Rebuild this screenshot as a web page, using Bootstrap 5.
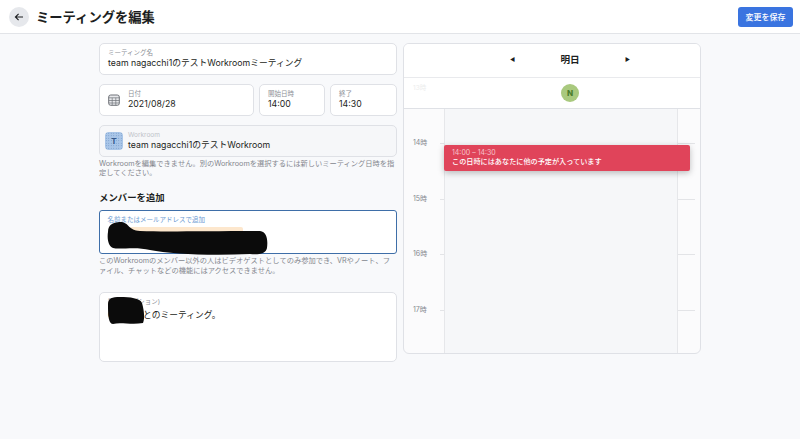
<!DOCTYPE html>
<html lang="ja"><head><meta charset="utf-8"><title>ミーティングを編集</title>
<link href="https://cdn.jsdelivr.net/npm/bootstrap@5.3.0/dist/css/bootstrap.min.css" rel="stylesheet">
<style>
html,body{height:100%}
body{background:#f8f9fb;color:#1c1e21;font-family:Inter,"Noto Sans CJK JP",sans-serif;overflow:hidden;font-size:8.75px}
.topbar{height:34px;background:#fff;border-bottom:1px solid #e2e4e8;padding:0 7px 0 9px}
.backbtn{width:20px;height:20px;border-radius:50%;background:#e6e8ec;border:0;padding:0}
.pagetitle{font-size:13.3px;font-weight:700;margin:0 0 0 7px;line-height:20px}
.savebtn{font-size:8px;font-weight:500;background:#3a74e0;color:#fff;border:0;border-radius:3px;width:55px;height:20px;padding:0}
.wrap{padding-top:9px;gap:6px}
.leftcol,.calcol{width:298px}
.fieldbox{background:#fff;border:1px solid #dfe1e6;border-radius:5px;padding:5px 8px;position:relative}
.fieldbox.h32{height:32px}
.fieldlab{font-size:6.5px;line-height:8px;color:#8d9097;display:block}
.fieldval{font-size:8.75px;line-height:12px;display:block}
.rowgap{margin-top:9px;gap:5px}
.datebox{width:155px}
.timebox1{width:66px}
.timebox2{width:67px}
.calicon{width:12px;height:12px;flex:none;margin-right:8px}
.wrbox{background:#f6f7f9;padding:0 8px 0 5px;height:31.5px;margin-top:9px}
.wrimg{width:18px;height:18px;border-radius:4px;background:#a9c6e8;color:#34578a;font-size:8px;font-weight:700;flex:none;margin-right:5px;background-image:radial-gradient(#6d92c4 .6px,transparent .8px);background-size:2.5px 2.5px}
.wrbox .fieldlab{color:#c0c3c9}
.hint{font-size:7.25px;line-height:9.5px;color:#85888f;margin:2px 0 0}
.sectitle{font-size:9.4px;font-weight:700;line-height:14px;margin:13px 0 5.5px}
.memberbox{height:44px;border:1.5px solid #3e6ea8;border-radius:3px;background:#fff;padding:5px 7.5px;position:relative}
.memberbox .fieldlab{color:#6d9ad2}
.chip{display:block;width:113px;height:8px;background:#fde7cd;border-radius:2px;margin:3px 0 0 22px}
.notebox{height:69.5px;margin-top:17px}
.notebox .fieldval{margin-top:3px}
.scrib{position:absolute;overflow:visible;pointer-events:none;filter:blur(.7px)}
.scrib1{left:0;top:0;width:180px;height:50px}
.scrib2{left:0;top:0;width:60px;height:40px}
.calbox{height:311px;background:#fbfbfc;border:1px solid #dfe1e6;border-radius:6px;overflow:hidden;position:relative}
.calhead{height:33.5px;background:#fff;border-bottom:1.5px solid #e9eaed;font-size:9.6px;font-weight:700;gap:44px;padding-left:36px}
.tri{font-size:5.5px;font-weight:400;line-height:1;color:#1c1e21;width:8px;text-align:center}
.alldayrow{height:31px;background:#fff;border-bottom:1px solid #dfe1e6;position:relative;padding-left:36px}
.avatar{width:18px;height:18px;border-radius:50%;background:#a9c97e;color:#4b7d2c;font-size:8px;font-weight:800}
.faint{position:absolute;left:9px;top:6px;font-size:6.5px;color:#eceded}
.calbody{height:245px;position:relative}
.gutter{width:40px;flex:none}
.daycol{width:234px;flex:none;background:#f6f7f9;border-left:1px solid #e6e7ea;border-right:1px solid #e6e7ea}
.sidecol{flex:1}
.hourlab{position:absolute;left:9px;font-size:7px;line-height:10px;color:#85888f}
.tick{position:absolute;height:1px;background:#e3e4e7}
.tickl{left:36px;width:4px}
.tickr{left:274px;width:17px}
.hour1{top:29.5px}.hour2{top:85.5px}.hour3{top:140.5px}.hour4{top:196.5px}
.line1{top:34px}.line2{top:90px}.line3{top:145px}.line4{top:201px}
.evt{position:absolute;left:40px;top:36px;width:246px;height:26px;background:#e0445a;border-radius:2px;color:#fff;padding:3px 8px;box-shadow:0 2px 6px rgba(0,0,0,.25)}
.evt span{display:block;line-height:9px}
.evttime{font-size:7px;color:#f6c5cc}
.evtmsg{font-size:7.15px;font-weight:500}
</style></head>
<body>
<header class="topbar d-flex align-items-center">
  <button class="backbtn d-flex align-items-center justify-content-center" aria-label="戻る">
    <svg width="10" height="10" viewBox="0 0 10 10"><path d="M9 5H1.5M4.6 1.8 1.4 5l3.2 3.2" fill="none" stroke="#1c1e21" stroke-width="1.1"/></svg>
  </button>
  <h1 class="pagetitle">ミーティングを編集</h1>
  <button class="savebtn ms-auto">変更を保存</button>
</header>
<main class="wrap d-flex justify-content-center align-items-start">
  <section class="leftcol">
    <div class="fieldbox h32">
      <span class="fieldlab">ミーティング名</span>
      <span class="fieldval">team nagacchi1のテストWorkroomミーティング</span>
    </div>
    <div class="d-flex rowgap">
      <div class="fieldbox h32 datebox d-flex">
        <svg class="calicon align-self-center" viewBox="0 0 12 12"><rect x=".7" y="1" width="10.6" height="10.3" rx="2" fill="#e8e9ec" stroke="#6f7278"/><path d="M.7 3.8h10.6M.7 6.5h10.6M.7 9h10.6M4.2 3.8v7.4M7.8 3.8v7.4" stroke="#6f7278" stroke-width=".7"/></svg>
        <div><span class="fieldlab">日付</span><span class="fieldval">2021/08/28</span></div>
      </div>
      <div class="fieldbox h32 timebox1"><span class="fieldlab">開始日時</span><span class="fieldval">14:00</span></div>
      <div class="fieldbox h32 timebox2"><span class="fieldlab">終了</span><span class="fieldval">14:30</span></div>
    </div>
    <div class="fieldbox wrbox d-flex align-items-center">
      <div class="wrimg d-flex align-items-center justify-content-center">T</div>
      <div><span class="fieldlab">Workroom</span><span class="fieldval">team nagacchi1のテストWorkroom</span></div>
    </div>
    <p class="hint">Workroomを編集できません。別のWorkroomを選択するには新しいミーティング日時を指定してください。</p>
    <h2 class="sectitle">メンバーを追加</h2>
    <div class="memberbox">
      <span class="fieldlab">名前またはメールアドレスで追加</span>
      <span class="chip"></span>
      <svg class="scrib scrib1" viewBox="100 211 180 50"><path d="M108 232C108 224 114 222 122 222C130 224 128 230 140 231C165 232 200 231 260 231C267 232 268 240 267 248C266 254 258 255 250 254C210 256 170 254 150 250C135 246 120 250 113 248C108 246 107 238 108 232Z" fill="#0b0b0b"/></svg>
    </div>
    <p class="hint">このWorkroomのメンバー以外の人はビデオゲストとしてのみ参加でき、VRやノート、ファイル、チャットなどの機能にはアクセスできません。</p>
    <div class="fieldbox notebox">
      <span class="fieldlab">説明 (オプション)</span>
      <span class="fieldval">〇〇さんとのミーティング。</span>
      <svg class="scrib scrib2" viewBox="100 293 60 40"><path d="M108 304C108 298 112 297 120 297C130 297 140 298 142 303C144 310 145 318 143 323C132 325 120 322 113 324C108 324 108 312 108 304Z" fill="#0b0b0b"/></svg>
    </div>
  </section>
  <section class="calcol calbox">
    <div class="calhead d-flex align-items-center justify-content-center">
      <span class="tri">◀</span><span>明日</span><span class="tri">▶</span>
    </div>
    <div class="alldayrow d-flex align-items-center justify-content-center">
      <span class="faint">13時</span>
      <div class="avatar d-flex align-items-center justify-content-center">N</div>
    </div>
    <div class="calbody d-flex">
      <div class="gutter"></div><div class="daycol"></div><div class="sidecol"></div>
      <span class="hourlab hour1">14時</span><span class="hourlab hour2">15時</span><span class="hourlab hour3">16時</span><span class="hourlab hour4">17時</span>
      <i class="tick tickl line1"></i><i class="tick tickl line2"></i><i class="tick tickl line3"></i><i class="tick tickl line4"></i>
      <i class="tick tickr line1"></i><i class="tick tickr line2"></i><i class="tick tickr line3"></i><i class="tick tickr line4"></i>
      <div class="evt"><span class="evttime">14:00 – 14:30</span><span class="evtmsg">この日時にはあなたに他の予定が入っています</span></div>
    </div>
  </section>
</main>
<script src="https://cdn.jsdelivr.net/npm/bootstrap@5.3.0/dist/js/bootstrap.bundle.min.js"></script>
</body></html>
